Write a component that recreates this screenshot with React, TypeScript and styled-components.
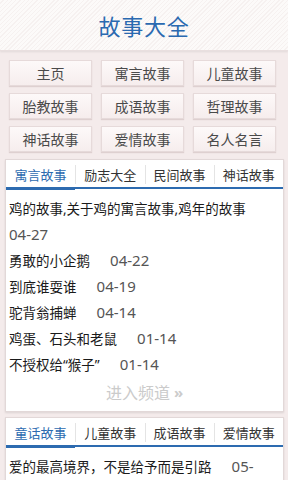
import React from "react";
import styled, { createGlobalStyle } from "styled-components";

const Global = createGlobalStyle`
  html, body { margin: 0; padding: 0; }
  body {
    background: #f4ebeb;
    font-family: "Noto Sans", "Noto Sans CJK SC", sans-serif;
    width: 288px;
    overflow-x: hidden;
  }
`;

const Page = styled.div`
  display: flex;
  flex-direction: column;
  width: 288px;
`;

const Header = styled.header`
  height: 50px;
  display: flex;
  align-items: center;
  justify-content: center;
  background: repeating-linear-gradient(
    135deg,
    #fcfaf9 0px,
    #fcfaf9 2px,
    #f6f1f0 2px,
    #f6f1f0 3px
  );
  border-bottom: 1px solid #e9dfdf;
  box-shadow: 0 1px 2px rgba(0, 0, 0, 0.08);
`;

const Title = styled.h1`
  margin: 0;
  font-size: 22px;
  font-weight: 400;
  color: #2a69b0;
  letter-spacing: 0.8px;
  font-family: "Noto Sans CJK SC", sans-serif;
`;

const Nav = styled.nav`
  display: grid;
  grid-template-columns: repeat(3, 83px);
  column-gap: 9px;
  row-gap: 7px;
  padding: 9px 12px 0 9px;
`;

const NavButton = styled.div`
  height: 26px;
  box-sizing: border-box;
  display: flex;
  align-items: center;
  justify-content: center;
  font-size: 14px;
  color: #4a4a4a;
  font-family: "Noto Sans CJK SC", sans-serif;
  background: linear-gradient(#fdf9f9, #f6eded);
  border: 1px solid #e6dada;
  box-shadow: 0 1px 1px rgba(120, 90, 90, 0.18);
`;

const Card = styled.section<{ $top: number }>`
  margin: ${(p) => p.$top}px 4px 0 5px;
  background: #fff;
  border: 1px solid #e2d8d8;
  box-shadow: 0 1px 2px rgba(0, 0, 0, 0.1);
  display: flex;
  flex-direction: column;
`;

const Tabs = styled.div`
  display: grid;
  grid-template-columns: repeat(4, 1fr);
  height: 27px;
  border-bottom: 2px solid #2d6bb0;
`;

const Tab = styled.div<{ $active?: boolean; $first?: boolean }>`
  position: relative;
  display: flex;
  align-items: center;
  justify-content: center;
  font-size: 13px;
  font-family: "Noto Sans CJK SC", sans-serif;
  color: ${(p) => (p.$active ? "#2d6bb0" : "#333")};
  border-left: ${(p) => (p.$first ? "none" : "1px solid #e4e4e4")};
  margin-top: 5px;
  margin-bottom: 4px;
  ${(p) =>
    p.$active &&
    `
    &::after {
      content: "";
      position: absolute;
      left: 0;
      right: 0;
      bottom: -6px;
      height: 3px;
      background: #2d6bb0;
    }
  `}
`;

const List = styled.ul`
  list-style: none;
  margin: 0;
  padding: 7px 21px 0 3px;
`;

const Item = styled.li`
  font-size: 13.5px;
  line-height: 26px;
  color: #1a1a1a;
  font-family: "Noto Sans", "Noto Sans CJK SC", sans-serif;
`;

const Gap = styled.span`
  white-space: pre-wrap;
  letter-spacing: 0.5px;
`;

const DateText = styled.span`
  font-family: "Noto Sans", sans-serif;
  font-size: 15px;
  line-height: 18px;
  color: #555;
`;

const More = styled.div`
  height: 28px;
  display: flex;
  align-items: center;
  justify-content: center;
  gap: 4px;
  font-size: 16px;
  color: #cbcbcb;
  font-family: "Noto Sans CJK SC", sans-serif;
  margin-bottom: 5px;
`;

const Chevrons = styled.span`
  font-size: 15px;
  font-weight: 700;
  font-family: "Noto Sans", sans-serif;
`;

type Story = { title: string; date: string };

const section1: Story[] = [
  { title: "鸡的故事,关于鸡的寓言故事,鸡年的故事", date: "04-27" },
  { title: "勇敢的小企鹅", date: "04-22" },
  { title: "到底谁耍谁", date: "04-19" },
  { title: "驼背翁捕蝉", date: "04-14" },
  { title: "鸡蛋、石头和老鼠", date: "01-14" },
  { title: "不授权给“猴子”", date: "01-14" },
];

const section2: Story[] = [
  { title: "爱的最高境界，不是给予而是引路", date: "05-06" },
  { title: "小猫钓鱼", date: "05-02" },
  { title: "丑小鸭", date: "04-28" },
];

const navItems = [
  "主页",
  "寓言故事",
  "儿童故事",
  "胎教故事",
  "成语故事",
  "哲理故事",
  "神话故事",
  "爱情故事",
  "名人名言",
];

function DateLabel({ date }: { date: string }) {
  const [m, d] = date.split("-");
  return (
    <DateText>
      {m}-<wbr />
      {d}
    </DateText>
  );
}

function StoryCard({
  tabs,
  stories,
  top,
  more,
}: {
  tabs: string[];
  stories: Story[];
  top: number;
  more?: boolean;
}) {
  return (
    <Card $top={top}>
      <Tabs>
        {tabs.map((t, i) => (
          <Tab key={t} $active={i === 0} $first={i === 0}>
            {t}
          </Tab>
        ))}
      </Tabs>
      <List>
        {stories.map((s) => (
          <Item key={s.title}>
            {s.title}
            <Gap>{"     "}</Gap>
            <DateLabel date={s.date} />
          </Item>
        ))}
      </List>
      {more && (
        <More>
          进入频道<Chevrons>»</Chevrons>
        </More>
      )}
    </Card>
  );
}

export default function App() {
  return (
    <Page>
      <Global />
      <Header>
        <Title>故事大全</Title>
      </Header>
      <Nav>
        {navItems.map((n) => (
          <NavButton key={n}>{n}</NavButton>
        ))}
      </Nav>
      <StoryCard
        top={7}
        tabs={["寓言故事", "励志大全", "民间故事", "神话故事"]}
        stories={section1}
        more
      />
      <StoryCard
        top={5}
        tabs={["童话故事", "儿童故事", "成语故事", "爱情故事"]}
        stories={section2}
        more
      />
    </Page>
  );
}
